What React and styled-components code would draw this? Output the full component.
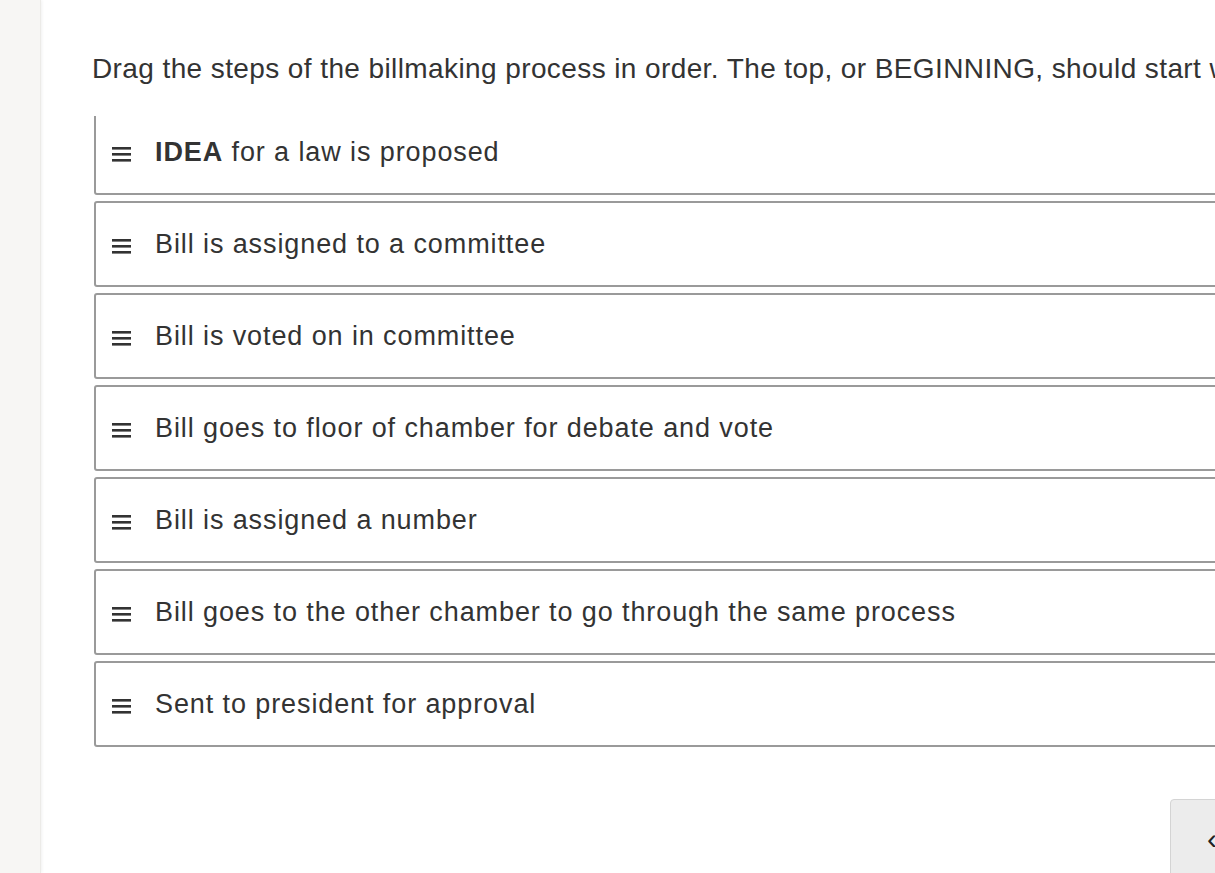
import React from 'react'
import styled, { createGlobalStyle } from 'styled-components'

const steps = [
  { bold: 'IDEA', rest: ' for a law is proposed' },
  { rest: 'Bill is assigned to a committee' },
  { rest: 'Bill is voted on in committee' },
  { rest: 'Bill goes to floor of chamber for debate and vote' },
  { rest: 'Bill is assigned a number' },
  { rest: 'Bill goes to the other chamber to go through the same process' },
  { rest: 'Sent to president for approval' },
]

const App = () => {
  return (
    <>
      <GlobalStyle />
      <Page>
        <Sidebar />
        <Main>
          <Prompt>
            Drag the steps of the billmaking process in order. The top, or BEGINNING, should start with the idea.
          </Prompt>
          <ListClip>
            <List>
              {steps.map((s, i) => (
                <Item key={i}>
                  <Handle width="19" height="16" viewBox="0 0 19 16">
                    <rect x="0" y="1" width="19" height="2.6" fill="#333" />
                    <rect x="0" y="7" width="19" height="2.6" fill="#333" />
                    <rect x="0" y="13" width="19" height="2.6" fill="#333" />
                  </Handle>
                  <Label>
                    {s.bold && <strong>{s.bold}</strong>}
                    {s.rest}
                  </Label>
                </Item>
              ))}
            </List>
          </ListClip>
          <Footer>
            <NavButton>‹</NavButton>
          </Footer>
        </Main>
      </Page>
    </>
  )
}

export default App;

const GlobalStyle = createGlobalStyle`
  html, body {
    margin: 0;
    padding: 0;
    overflow: hidden;
    background: #ffffff;
  }
  body {
    font-family: "Liberation Sans", Arial, Helvetica, sans-serif;
    color: #333333;
  }
`;

const Page = styled.div`
  display: flex;
  width: 1215px;
  height: 873px;
  overflow: hidden;
`;

const Sidebar = styled.div`
  flex: 0 0 40px;
  background: #f7f6f4;
  border-right: 1px solid #ecebe8;
  box-shadow: 1px 0 3px rgba(0, 0, 0, 0.06);
`;

const Main = styled.div`
  flex: 0 0 1500px;
  padding: 0 0 0 51px;
  display: flex;
  flex-direction: column;
`;

const Prompt = styled.p`
  flex-shrink: 0;
  margin: 51px 0 0 0;
  font-size: 28px;
  letter-spacing: 0.4px;
  line-height: 36px;
  white-space: nowrap;
  color: #333333;
`;

const ListClip = styled.div`
  flex-shrink: 0;
  margin-top: 29px;
  margin-left: 2px;
  padding-bottom: 7px;
  overflow: hidden;
`;

const List = styled.div`
  display: flex;
  flex-direction: column;
  gap: 6px;
  margin-top: -7px;
`;

const Item = styled.div`
  display: flex;
  align-items: center;
  gap: 24px;
  height: 82px;
  padding: 0 0 0 16px;
  border: 2px solid #9a9a9a;
  border-radius: 3px;
  background: #ffffff;
`;

const Handle = styled.svg`
  flex: 0 0 auto;
  margin-top: 3px;
`;

const Label = styled.span`
  font-size: 27px;
  letter-spacing: 0.9px;
  color: #333333;
  white-space: nowrap;

  strong {
    font-weight: 700;
  }
`;

const Footer = styled.div`
  flex-shrink: 0;
  display: flex;
  justify-content: flex-start;
  padding-left: 1078px;
  margin-top: 45px;
`;

const NavButton = styled.button`
  width: 120px;
  height: 80px;
  background: #ececec;
  border: 1px solid #d4d4d4;
  border-radius: 4px;
  font-family: "Liberation Sans", Arial, sans-serif;
  font-size: 30px;
  color: #222;
  text-align: left;
  padding-left: 36px;
`;
